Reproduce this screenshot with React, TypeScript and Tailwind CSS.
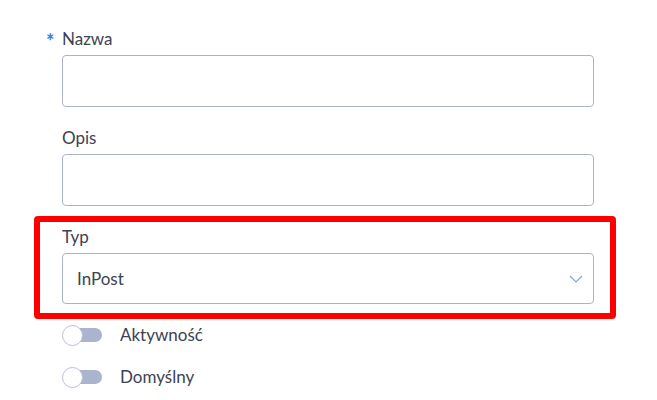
import { useState } from "react";

const FONT = "font-['Lato','Open_Sans',sans-serif]";

function Field({
  label,
  required = false,
  children,
}: {
  label: string;
  required?: boolean;
  children: React.ReactNode;
}): React.ReactElement {
  return (
    <div className="flex flex-col gap-1">
      <label className="relative h-6 text-[17px] leading-6 text-[#3d4252]">
        {required && (
          <span className="absolute -left-[16px] top-[4px] text-[20px] font-bold leading-none text-[#2f7de8]">
            *
          </span>
        )}
        {label}
      </label>
      {children}
    </div>
  );
}

function TextInput(): React.ReactElement {
  return (
    <input
      type="text"
      className="h-[52px] w-full rounded-[4px] border border-[#aab3cb] bg-white px-[15px] text-[17px] outline-none"
    />
  );
}

function Toggle({ label }: { label: string }): React.ReactElement {
  const [on, setOn] = useState(false);
  return (
    <button
      type="button"
      onClick={() => setOn(!on)}
      className="flex h-6 items-center gap-[18px] text-left"
    >
      <span className="relative flex h-[21px] w-[40px] items-center">
        <span className="ml-[4px] h-[14px] w-[36px] rounded-full bg-[#aab4cf]" />
        <span className="absolute left-0 top-0 h-[21px] w-[21px] rounded-full border border-[#b9c1d6] bg-white" />
      </span>
      <span className="text-[17px] text-[#3d4252]">{label}</span>
    </button>
  );
}

export default function App(): React.ReactElement {
  return (
    <div className={`min-h-[400px] w-[657px] bg-white ${FONT}`}>
      <div className="ml-[62px] w-[532px] pt-[27px]">
        <div className="mb-[19px]">
          <Field label="Nazwa" required>
            <TextInput />
          </Field>
        </div>
        <div className="mb-[10px]">
          <Field label="Opis">
            <TextInput />
          </Field>
        </div>

        {/* highlighted field */}
        <div className="-ml-[28px] -mr-[22px] rounded-[4px] border-[6px] border-[#ff0000] pb-[9px] pl-[22px] pr-[16px] pt-[3px]">
          <Field label="Typ">
            <div className="flex h-[51px] w-full items-center justify-between rounded-[4px] border border-[#aab3cb] bg-white pl-[14px] pr-[10px]">
              <span className="text-[17px] text-[#3d4252]">InPost</span>
              <svg width="14" height="8" viewBox="0 0 14 8" fill="none">
                <path d="M1 1l6 6 6-6" stroke="#7aa5e8" strokeWidth="1.2" />
              </svg>
            </div>
          </Field>
        </div>

        <div className="mt-[4px] flex flex-col gap-[18px]">
          <Toggle label="Aktywność" />
          <Toggle label="Domyślny" />
        </div>
      </div>
    </div>
  );
}
